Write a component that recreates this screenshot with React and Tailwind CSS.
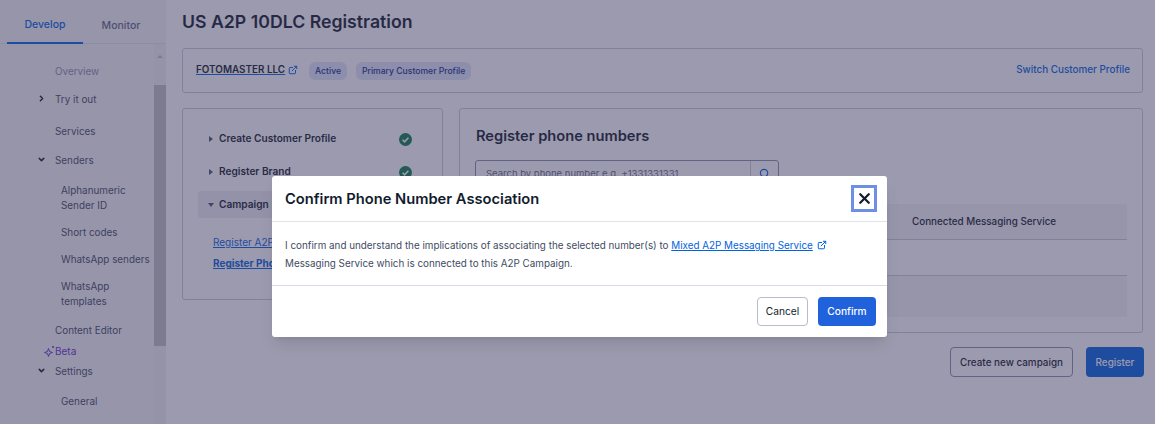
import { ChevronRight, ChevronDown, ExternalLink, Search, X } from 'lucide-react';

function CheckBadge() {
  return (
    <svg width="13" height="13" viewBox="0 0 13 13" className="shrink-0">
      <circle cx="6.5" cy="6.5" r="6.5" fill="#0e7c4f" />
      <path d="M3.6 6.8l2 2 3.8-4" fill="none" stroke="#fff" strokeWidth="1.6" />
    </svg>
  );
}

function Caret({ open }) {
  return (
    <svg width="6" height="6" viewBox="0 0 6 6" className="shrink-0">
      {open ? <path d="M0 1h6L3 5z" fill="#4b5671" /> : <path d="M1 0v6l4-3z" fill="#4b5671" />}
    </svg>
  );
}

function Sparkle() {
  return (
    <svg width="11" height="12" viewBox="0 0 11 12" className="shrink-0">
      <path d="M4.5 3.5l1 3 3 1-3 1-1 3-1-3-3-1 3-1z" fill="none" stroke="#5b3fd6" strokeWidth="1" />
      <path d="M8 1l2 2M10 1L8 3" stroke="#5b3fd6" strokeWidth="0.8" />
    </svg>
  );
}

function NavItem({ icon, sub, children, className = '' }) {
  return (
    <div className={`relative text-[9.9px] leading-[15px] text-[#414b63] ${sub ? 'pl-[61px]' : 'pl-[55px]'} ${className}`}>
      {icon && <span className="absolute left-[37px] top-0.5 text-[#121c2d]">{icon}</span>}
      {children}
    </div>
  );
}

function Sidebar() {
  return (
    <aside className="w-[166px] h-full shrink-0 bg-[#f4f4f6] flex flex-col">
      <div className="flex h-11 pl-[7px] pr-1.5 border-b border-[#e1e3ea] text-[10.5px] font-medium">
        <div className="w-[76px] border-b-2 border-[#0263e0] h-11 flex items-center justify-center text-[#0263e0] pt-2">Develop</div>
        <div className="w-[76px] h-11 flex items-center justify-center text-[#606b85] pt-2">Monitor</div>
      </div>
      <div className="flex flex-1 min-h-0">
        <nav className="flex-1 min-w-0 pt-5">
          <NavItem className="text-[#8891aa]!">Overview</NavItem>
          <NavItem className="mt-[13px]" icon={<ChevronRight size={9} strokeWidth={4} />}>Try it out</NavItem>
          <NavItem className="mt-[17px]">Services</NavItem>
          <NavItem className="mt-[14px]" icon={<ChevronDown size={9} strokeWidth={4} />}>Senders</NavItem>
          <NavItem className="mt-[15px]" sub>Alphanumeric<br />Sender ID</NavItem>
          <NavItem className="mt-[12px]" sub>Short codes</NavItem>
          <NavItem className="mt-[12px]" sub><span className="whitespace-nowrap">WhatsApp senders</span></NavItem>
          <NavItem className="mt-[12px]" sub>WhatsApp<br />templates</NavItem>
          <NavItem className="mt-[14px]">Content Editor</NavItem>
          <div className="flex items-center pl-[44px] h-[14px] mt-[6px] text-[10px] text-[#6d2ed1]"><Sparkle />Beta</div>
          <NavItem className="mt-[6px]" icon={<ChevronDown size={9} strokeWidth={4} />}>Settings</NavItem>
          <NavItem className="mt-[15px]" sub>General</NavItem>
          <NavItem className="mt-[13px]" sub>Compliance</NavItem>
        </nav>
        <div className="w-3 shrink-0 bg-[#f1f1f1] pt-[10px]">
          <svg width="12" height="4" viewBox="0 0 12 4" className="block">
            <path d="M3 4l3-3 3 3z" fill="#c1c1c1" />
          </svg>
          <div className="h-[261px] mt-[27px] bg-[#c1c1c1]" />
        </div>
      </div>
    </aside>
  );
}

function LeftSteps() {
  return (
    <div className="w-[261px] h-[192px] shrink-0 border border-[#cacdd8] rounded-[3px] px-[15px] pt-[22px]">
      <div className="flex items-center h-4 pl-[10px] pr-[15px] text-[10.1px] font-semibold text-[#121c2d]">
        <Caret /><span className="ml-[5px] flex-1">Create Customer Profile</span><CheckBadge />
      </div>
      <div className="flex items-center h-4 mt-[17px] pl-[10px] pr-[15px] text-[10.1px] font-semibold text-[#121c2d]">
        <Caret /><span className="ml-[5px] flex-1">Register Brand</span><CheckBadge />
      </div>
      <div className="flex items-center h-[27px] mt-[11px] pl-[10px] rounded-[3px] bg-[#eeeef2] text-[10.1px] font-semibold text-[#121c2d]">
        <Caret open /><span className="ml-[5px]">Campaign</span>
      </div>
      <div className="mt-[16px] pl-[15px] text-[10px] leading-4 text-[#0263e0] underline">Register A2P Campaign</div>
      <div className="mt-[5px] pl-[15px] text-[10px] leading-4 font-bold text-[#0263e0] underline">Register Phone Numbers</div>
    </div>
  );
}

function PhonePanel() {
  return (
    <div className="flex-1 h-[225px] border border-[#cacdd8] rounded-[3px] px-[15px] pt-[17px]">
      <h2 className="pl-px text-[14.65px] leading-5 font-semibold text-[#121c2d]">Register phone numbers</h2>
      <div className="flex w-[304px] h-[27px] mt-[14px] border border-[#8891aa] rounded-[3px] text-[9.5px] text-[#606b85]">
        <div className="flex-1 pl-[10px] leading-[25px]">Search by phone number e.g. +1331331331</div>
        <div className="w-7 border-l border-[#cacdd8] flex items-center justify-center text-[#0263e0]"><Search size={11} strokeWidth={2.5} /></div>
      </div>
      <div className="mt-[17px] w-[652px] text-[9.85px] font-medium text-[#121c2d]">
        <div className="h-9 bg-[#f4f4f6] border-b border-[#cacdd8] flex items-center pl-[437px]">Connected Messaging Service</div>
        <div className="h-9 border-b border-[#cacdd8]" />
        <div className="h-[41px] bg-[#f4f4f6]" />
      </div>
    </div>
  );
}

function Main() {
  return (
    <main className="flex-1 min-w-0 pl-4 pr-3 pt-[10px]">
      <h1 className="text-[17.7px] leading-6 font-semibold text-[#121c2d]">US A2P 10DLC Registration</h1>
      <div className="mt-[14px] h-[45px] border border-[#cacdd8] rounded-[3px] flex items-center pl-[13px] pr-3">
        <span className="mb-[2px] font-semibold text-[9.9px] text-[#121c2d] underline decoration-[#0263e0]">FOTOMASTER LLC</span>
        <ExternalLink size={10} strokeWidth={2.4} className="mb-[2px] ml-[3px] text-[#0263e0]" />
        <span className="ml-[11px] h-[18px] px-[6px] rounded-md bg-[#dfe6f8] text-[#12308c] leading-[18px] font-medium text-[8.6px]">Active</span>
        <span className="ml-[9px] h-[18px] px-[6px] rounded-md bg-[#dfe6f8] text-[#12308c] leading-[18px] font-medium text-[8.6px]">Primary Customer Profile</span>
        <span className="mb-[2px] ml-auto text-[#0263e0] font-medium text-[9.9px]">Switch Customer Profile</span>
      </div>
      <div className="flex items-start gap-[16px] mt-[15px]">
        <LeftSteps />
        <PhonePanel />
      </div>
      <div className="flex justify-end gap-[13px] mt-[14px] text-[9.9px] font-medium -mr-px">
        <button className="h-[30px] w-[123px] rounded border border-[#8891aa] text-[#121c2d]">Create new campaign</button>
        <button className="h-[30px] w-[58px] rounded bg-[#0263e0] text-white">Register</button>
      </div>
    </main>
  );
}

function Modal() {
  return (
    <div className="w-[615px] h-[161px] bg-white rounded-[3px] shadow-lg flex flex-col">
      <div className="h-[46px] shrink-0 border-b border-[#e1e3ea] flex items-center pl-[13px] pr-[10px]">
        <h3 className="flex-1 pt-0.5 text-[14.7px] font-semibold text-[#121c2d]">Confirm Phone Number Association</h3>
        <button className="w-[26px] h-[27px] border-[3px] border-[#6d8fe8] flex items-center justify-center text-[#121c2d]">
          <X size={17} strokeWidth={3.2} />
        </button>
      </div>
      <div className="h-[64px] shrink-0 border-b border-[#d8dbe3] pl-[13px] pt-[14px] text-[9.85px] leading-[18px] text-[#414b63]">
        <div className="flex items-center">
          I confirm and understand the implications of associating the selected number(s) to&nbsp;
          <span className="text-[#0263e0] underline">Mixed A2P Messaging Service</span>
          <ExternalLink size={10} strokeWidth={2.4} className="ml-[4px] text-[#0263e0]" />
        </div>
        <div>Messaging Service which is connected to this A2P Campaign.</div>
      </div>
      <div className="flex-1 flex items-center justify-end gap-[10px] pr-[11px] text-[10.2px]">
        <button className="w-[51px] h-[29px] rounded border border-[#b7bbcb] text-[#121c2d]">Cancel</button>
        <button className="w-[58px] h-[29px] rounded bg-[#1f62db] text-white font-medium">Confirm</button>
      </div>
    </div>
  );
}

export default function App() {
  return (
    <div className="relative w-[1155px] h-[424px] overflow-hidden bg-white font-['Inter',sans-serif]">
      <div className="flex h-full">
        <Sidebar />
        <Main />
      </div>
      {/* backdrop and dialog */}
      <div className="absolute inset-0 bg-[#39355d]/50" />
      <div className="absolute left-[272px] top-[176px]">
        <Modal />
      </div>
    </div>
  );
}
